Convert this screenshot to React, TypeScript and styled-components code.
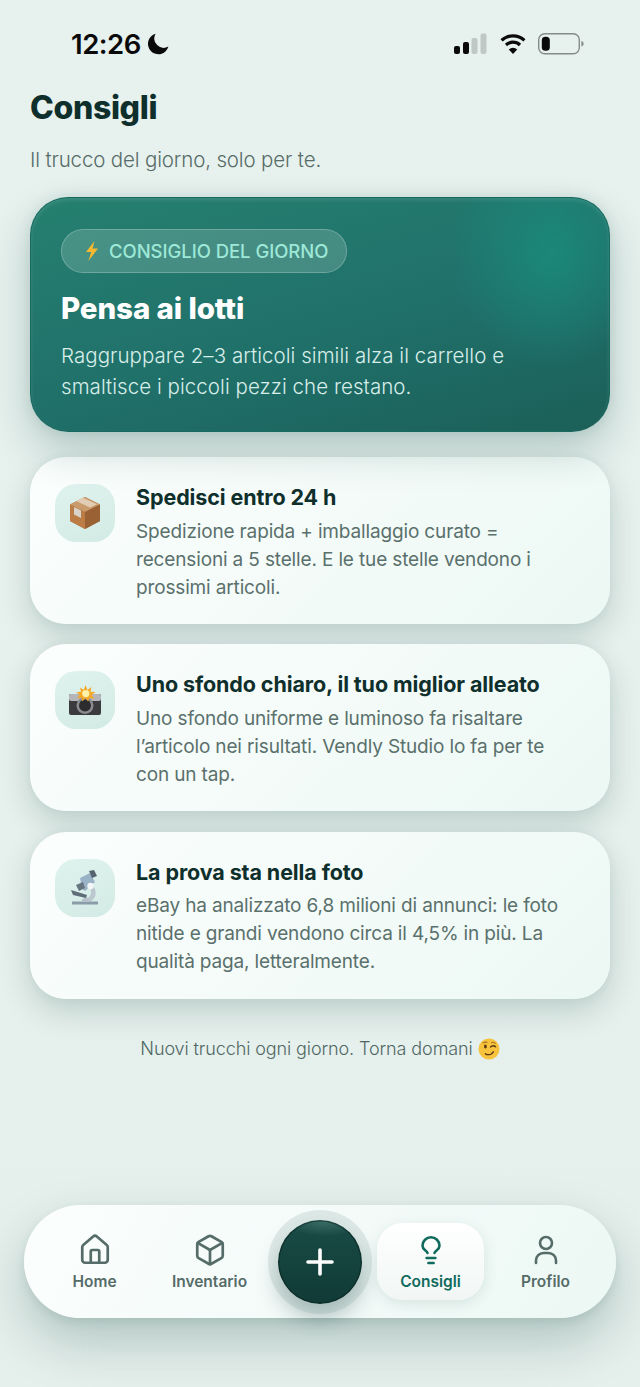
import React from 'react';
import styled, { createGlobalStyle } from 'styled-components';
import { Box, House } from 'lucide-react';

const GlobalStyle = createGlobalStyle`
  html, body {
    margin: 0;
    padding: 0;
    background: #e6f0ed;
  }
  * {
    box-sizing: border-box;
  }
`;

const font = `Inter, "Noto Sans", sans-serif`;

const BoxEmoji = () => (
  <svg width="36" height="36" viewBox="0 0 36 36">
    <path d="M18 2 L33 9.5 V26 L18 34 L3 26 V9.5 Z" fill="#a9703f" />
    <path d="M18 2 L33 9.5 L18 17 L3 9.5 Z" fill="#c99a6b" />
    <path d="M18 17 V34 L3 26 V9.5 Z" fill="#bb7c45" />
    <path d="M18 17 V34 L33 26 V9.5 Z" fill="#9a6234" />
    <path d="M9 6 L16 2.8 L30 9.2 L23 12.6 Z" fill="#e2cdb4" />
    <path d="M7 12 L14 15.4 V23 L7 19.5 Z" fill="#d9d3c9" />
  </svg>
);

const CameraEmoji = () => (
  <svg width="36" height="36" viewBox="0 0 36 36">
    <rect x="2" y="12" width="32" height="21" rx="2" fill="#3b3b3e" />
    <rect x="2" y="12" width="32" height="7" rx="2" fill="#b4b6ba" />
    <circle cx="18" cy="23.5" r="8.5" fill="#8a8c90" />
    <circle cx="18" cy="23.5" r="6" fill="#2c2c2f" />
    <path
      d="M18.5 3 L20.4 8 L24.5 5 L23.4 9.8 L28.6 10 L24.6 13 L27.6 17 L22.6 15.8 L21 19.4 L18.4 16 L15.4 19.4 L14.6 15.4 L10 16.4 L12.8 12.8 L9 10.2 L14 9.8 L13 5.4 L16.8 8 Z"
      fill="#f6a723"
    />
    <circle cx="18.8" cy="11.6" r="3.6" fill="#fff1a8" />
  </svg>
);

const MicroscopeEmoji = () => (
  <svg width="36" height="36" viewBox="0 0 36 36">
    <path d="M5 31.5 H31 V34.5 H5 Z" fill="#8a9ca7" />
    <path d="M14 32 C16 25 24 27 25 32 Z" fill="#b5c2ca" />
    <path d="M4 20 L20 25 L19 28 L6 25 Z" fill="#5d6c76" />
    <path d="M25 15 C31 20 29 29 24 31 L21 28 C24 26 25 21 23 17 Z" fill="#bcc8d0" />
    <path d="M13 8 L23 3 L28 12 L18 21 L15 19 Z" fill="#9ab2c6" />
    <path d="M22 1 L27 0 L30 6 L25 8 Z" fill="#56646d" />
    <path d="M9 15 L16 12 L18 18 L12 21 Z" fill="#66757f" />
    <circle cx="23.5" cy="16" r="3.2" fill="#f3f6f7" />
  </svg>
);

const BoltEmoji = () => (
  <svg width="14" height="20" viewBox="0 0 14 20">
    <path d="M9.5 0 L1 11 H6.2 L3.4 20 L13 7.6 H7.6 Z" fill="#f5b82e" />
  </svg>
);

const WinkEmoji = () => (
  <InlineIcon width="22" height="22" viewBox="0 0 22 22">
    <circle cx="11" cy="11" r="10.5" fill="#f7c23c" />
    <ellipse cx="7.4" cy="8.6" rx="1.4" ry="2" fill="#5b3a12" />
    <path d="M12.6 9 C14 7.4 16.2 7.4 17.6 8.8" stroke="#5b3a12" strokeWidth="1.4" fill="none" strokeLinecap="round" />
    <path d="M5 5 C6 4 7.6 3.8 9 4.2 M13.6 4.6 C15 4 16.4 4.4 17.4 5.4" stroke="#8a5a18" strokeWidth="1" fill="none" strokeLinecap="round" />
    <path d="M7.4 15.8 C10 17.4 13.4 16.6 15.4 13.8" stroke="#5b3a12" strokeWidth="1.4" fill="none" strokeLinecap="round" />
  </InlineIcon>
);

const BulbIcon = () => (
  <svg width="24" height="34" viewBox="0 0 24 34" fill="none" stroke="currentColor" strokeWidth="2.6" strokeLinecap="round" strokeLinejoin="round">
    <path d="M8.5 20 C8 17.5 3.5 17 3.5 12.8 A8.5 8.5 0 0 1 20.5 12.8 C20.5 17 16 17.5 15.5 20" />
    <path d="M7.6 25 H16.4" />
    <path d="M9.4 30 H14.6" />
  </svg>
);

const PersonIcon = () => (
  <svg width="26" height="34" viewBox="0 0 26 34" fill="none" stroke="currentColor" strokeWidth="2.6" strokeLinecap="round">
    <circle cx="13" cy="10" r="6" />
    <path d="M3 30 V27.5 A7.5 7.5 0 0 1 10.5 20 H15.5 A7.5 7.5 0 0 1 23 27.5 V30" />
  </svg>
);

const StatusBar = () => (
  <StatusRow>
    <Clock>
      12:26
      <svg width="22" height="22" viewBox="0 0 22 22">
        <path d="M8.6 0.8 A10.4 10.4 0 1 0 21.4 13.6 A9.4 9.4 0 0 1 8.6 0.8 Z" fill="#0a0a0a" />
      </svg>
    </Clock>
    <StatusIcons>
      <svg width="34" height="22" viewBox="0 0 34 22">
        <rect x="0" y="13" width="6" height="8" rx="2" fill="#0a0a0a" />
        <rect x="9" y="9" width="6" height="12" rx="2" fill="#0a0a0a" />
        <rect x="17.5" y="5" width="6" height="16" rx="2" fill="#bfc8c5" />
        <rect x="26.5" y="0.5" width="6" height="20.5" rx="2" fill="#bfc8c5" />
      </svg>
      <svg width="28" height="22" viewBox="0 0 26 22" fill="none" stroke="#0a0a0a" strokeWidth="3.2">
        <path d="M1.6 7.4 A16.4 16.4 0 0 1 24.4 7.4" />
        <path d="M6 12 A10.2 10.2 0 0 1 20 12" />
        <path d="M13 21 L8.8 16.4 A6 6 0 0 1 17.2 16.4 Z" fill="#0a0a0a" stroke="none" />
      </svg>
      <svg width="46" height="22" viewBox="0 0 46 22">
        <rect x="0.7" y="0.7" width="40.6" height="20" rx="6" fill="none" stroke="#868c8a" strokeWidth="1.4" />
        <rect x="3.8" y="3.8" width="8" height="14" rx="3.6" fill="#0a0a0a" />
        <path d="M43.4 8 C45 8.4 45.6 9.6 45.6 10.8 C45.6 12 45 13.2 43.4 13.6 Z" fill="#868c8a" />
      </svg>
    </StatusIcons>
  </StatusRow>
);

const tips = [
  {
    icon: <BoxEmoji />,
    title: 'Spedisci entro 24 h',
    text: 'Spedizione rapida + imballaggio curato = recensioni a 5 stelle. E le tue stelle vendono i prossimi articoli.',
  },
  {
    icon: <CameraEmoji />,
    title: 'Uno sfondo chiaro, il tuo miglior alleato',
    text: 'Uno sfondo uniforme e luminoso fa risaltare l’articolo nei risultati. Vendly Studio lo fa per te con un tap.',
  },
  {
    icon: <MicroscopeEmoji />,
    title: 'La prova sta nella foto',
    text: 'eBay ha analizzato 6,8 milioni di annunci: le foto nitide e grandi vendono circa il 4,5% in più. La qualità paga, letteralmente.',
  },
];

const App = () => (
  <Page>
    <GlobalStyle />
    <StatusBar />
    <Header>
      <Title>Consigli</Title>
      <Subtitle>Il trucco del giorno, solo per te.</Subtitle>
    </Header>
    <Hero>
      <Badge>
        <BoltEmoji />
        CONSIGLIO DEL GIORNO
      </Badge>
      <HeroTitle>Pensa ai lotti</HeroTitle>
      <HeroText>
        Raggruppare 2–3 articoli simili alza il carrello e
        <br />
        smaltisce i piccoli pezzi che restano.
      </HeroText>
    </Hero>
    <TipList>
      {tips.map((tip) => (
        <TipCard key={tip.title}>
          <TipIcon>{tip.icon}</TipIcon>
          <div>
            <TipTitle>{tip.title}</TipTitle>
            <TipText>{tip.text}</TipText>
          </div>
        </TipCard>
      ))}
    </TipList>
    <Footnote>
      Nuovi trucchi ogni giorno. Torna domani <WinkEmoji />
    </Footnote>
    <Nav>
      <NavItem>
        <House size={34} strokeWidth={1.9} />
        Home
      </NavItem>
      <NavItem>
        <Box size={34} strokeWidth={1.9} />
        Inventario
      </NavItem>
      <FabSlot>
        <Fab>
          <svg width="30" height="30" viewBox="0 0 30 30" stroke="#fff" strokeWidth="3.6" strokeLinecap="round">
            <path d="M15 3 V27 M3 15 H27" />
          </svg>
        </Fab>
      </FabSlot>
      <NavItem $active>
        <BulbIcon />
        Consigli
      </NavItem>
      <NavItem>
        <PersonIcon />
        Profilo
      </NavItem>
    </Nav>
  </Page>
);

const Page = styled.div`
  position: relative;
  width: 640px;
  height: 1387px;
  overflow: hidden;
  display: flex;
  flex-direction: column;
  font-family: ${font};
  background: linear-gradient(180deg, #e7f1ee 0%, #e5efec 100%);
`;

const StatusRow = styled.div`
  height: 87px;
  flex: none;
  padding: 0 56px 0 71px;
  display: flex;
  align-items: center;
  justify-content: space-between;
`;

const Clock = styled.div`
  display: flex;
  align-items: center;
  gap: 6px;
  font-size: 27.5px;
  font-weight: 600;
  letter-spacing: -0.5px;
  color: #0a0a0a;
`;

const StatusIcons = styled.div`
  display: flex;
  align-items: center;
  gap: 11px;
`;

const Header = styled.header`
  padding: 0 30px;
`;

const Title = styled.h1`
  margin: 0;
  font-size: 32px;
  line-height: 42px;
  font-weight: 800;
  letter-spacing: -0.35px;
  color: #0e2f2b;
`;

const Subtitle = styled.p`
  margin: 16px 0 0;
  font-size: 20.5px;
  line-height: 30px;
  font-weight: 300;
  letter-spacing: -0.15px;
  color: #566c68;
`;

const Hero = styled.section`
  position: relative;
  flex: none;
  margin: 22px 30px 0;
  height: 235px;
  padding: 31px 30px 0;
  border-radius: 38px;
  border: 1.5px solid rgba(22, 104, 94, 0.9);
  background:
    radial-gradient(ellipse 100px 115px at 520px 55px, rgba(26, 140, 124, 0.85) 0%, rgba(26, 140, 124, 0) 100%),
    linear-gradient(165deg, #25806f 0%, #20706a 55%, #1b5f58 100%);
  box-shadow:
    inset 0 2px 4px rgba(255, 255, 255, 0.12),
    0 18px 40px rgba(20, 80, 72, 0.24),
    0 0 14px rgba(20, 80, 72, 0.1);
`;

const Badge = styled.div`
  display: inline-flex;
  align-items: center;
  gap: 10px;
  height: 44px;
  padding: 0 18px 0 23px;
  border-radius: 22px;
  border: 1.5px solid rgba(255, 255, 255, 0.22);
  background: rgba(255, 255, 255, 0.16);
  font-size: 18.5px;
  font-weight: 500;
  letter-spacing: -0.05px;
  color: #9de8d6;
`;

const HeroTitle = styled.h2`
  margin: 14px 0 0;
  font-size: 29.5px;
  line-height: 42px;
  font-weight: 800;
  letter-spacing: -0.1px;
  color: #ffffff;
`;

const HeroText = styled.p`
  margin: 11px 0 0;
  font-size: 20.5px;
  line-height: 31px;
  font-weight: 300;
  letter-spacing: 0.05px;
  color: #d8eee9;
`;

const TipList = styled.div`
  margin: 25px 30px 0;
  display: flex;
  flex-direction: column;
  gap: 20.4px;
`;

const TipCard = styled.article`
  height: 167px;
  padding: 27px 32px 0 25px;
  display: flex;
  align-items: flex-start;
  gap: 21px;
  border-radius: 36px;
  background: linear-gradient(135deg, #fbfefd 0%, #ecf8f4 100%);
  box-shadow:
    0 12px 30px rgba(30, 80, 72, 0.2),
    0 0 10px rgba(30, 80, 72, 0.05);
`;

const TipIcon = styled.div`
  flex: none;
  width: 60px;
  height: 58px;
  display: flex;
  align-items: center;
  justify-content: center;
  border-radius: 21px;
  background: linear-gradient(160deg, #e0f3ee 0%, #d2eae5 100%);
`;

const TipTitle = styled.h3`
  margin: 0;
  font-size: 21.5px;
  line-height: 26px;
  font-weight: 700;
  letter-spacing: -0.1px;
  color: #0e2f2b;
`;

const TipText = styled.p`
  margin: 7.5px 0 0;
  font-size: 19px;
  line-height: 28px;
  font-weight: 400;
  letter-spacing: -0.15px;
  color: #5a706c;
`;

const Footnote = styled.p`
  margin: 37px 0 0;
  display: flex;
  align-items: center;
  justify-content: center;
  gap: 5px;
  font-size: 18px;
  line-height: 26px;
  font-weight: 300;
  letter-spacing: -0.1px;
  color: #4f6864;
`;

const InlineIcon = styled.svg`
  flex: none;
`;

const Nav = styled.nav`
  flex: none;
  margin: auto 24px 69px;
  height: 113px;
  padding: 0 17px;
  display: flex;
  align-items: center;
  gap: 8px;
  border-radius: 57px;
  background: linear-gradient(120deg, #fbfefd 0%, #f2faf8 60%, #ecf8f4 100%);
  box-shadow:
    0 24px 50px rgba(30, 80, 72, 0.26),
    0 4px 10px rgba(30, 80, 72, 0.1);
`;

const NavItem = styled.div<{ $active?: boolean }>`
  width: 107px;
  height: 77px;
  display: flex;
  flex-direction: column;
  align-items: center;
  justify-content: space-between;
  padding: 10px 0 8px;
  border-radius: 26px;
  font-size: 15.5px;
  line-height: 20px;
  font-weight: 600;
  color: ${(p) => (p.$active ? '#106a5e' : '#566c68')};
  background: ${(p) => (p.$active ? 'linear-gradient(180deg, #ffffff 0%, #f1f6f5 100%)' : 'transparent')};
  box-shadow: ${(p) => (p.$active ? '0 4px 14px rgba(30, 80, 72, 0.12)' : 'none')};
`;

const FabSlot = styled.div`
  flex: none;
  width: 98px;
  display: flex;
  justify-content: center;
`;

const Fab = styled.div`
  width: 84px;
  height: 84px;
  flex: none;
  display: flex;
  align-items: center;
  justify-content: center;
  border-radius: 50%;
  background:
    radial-gradient(ellipse 40px 16px at 55% 0%, rgba(90, 140, 132, 0.55) 0%, rgba(90, 140, 132, 0) 100%),
    linear-gradient(180deg, #1a4c46 0%, #103a36 100%);
  box-shadow:
    inset 0 0 0 1.5px rgba(8, 30, 28, 0.5),
    0 0 0 10px rgba(130, 160, 155, 0.2),
    0 14px 22px rgba(20, 60, 55, 0.3);
`;

export default App;
